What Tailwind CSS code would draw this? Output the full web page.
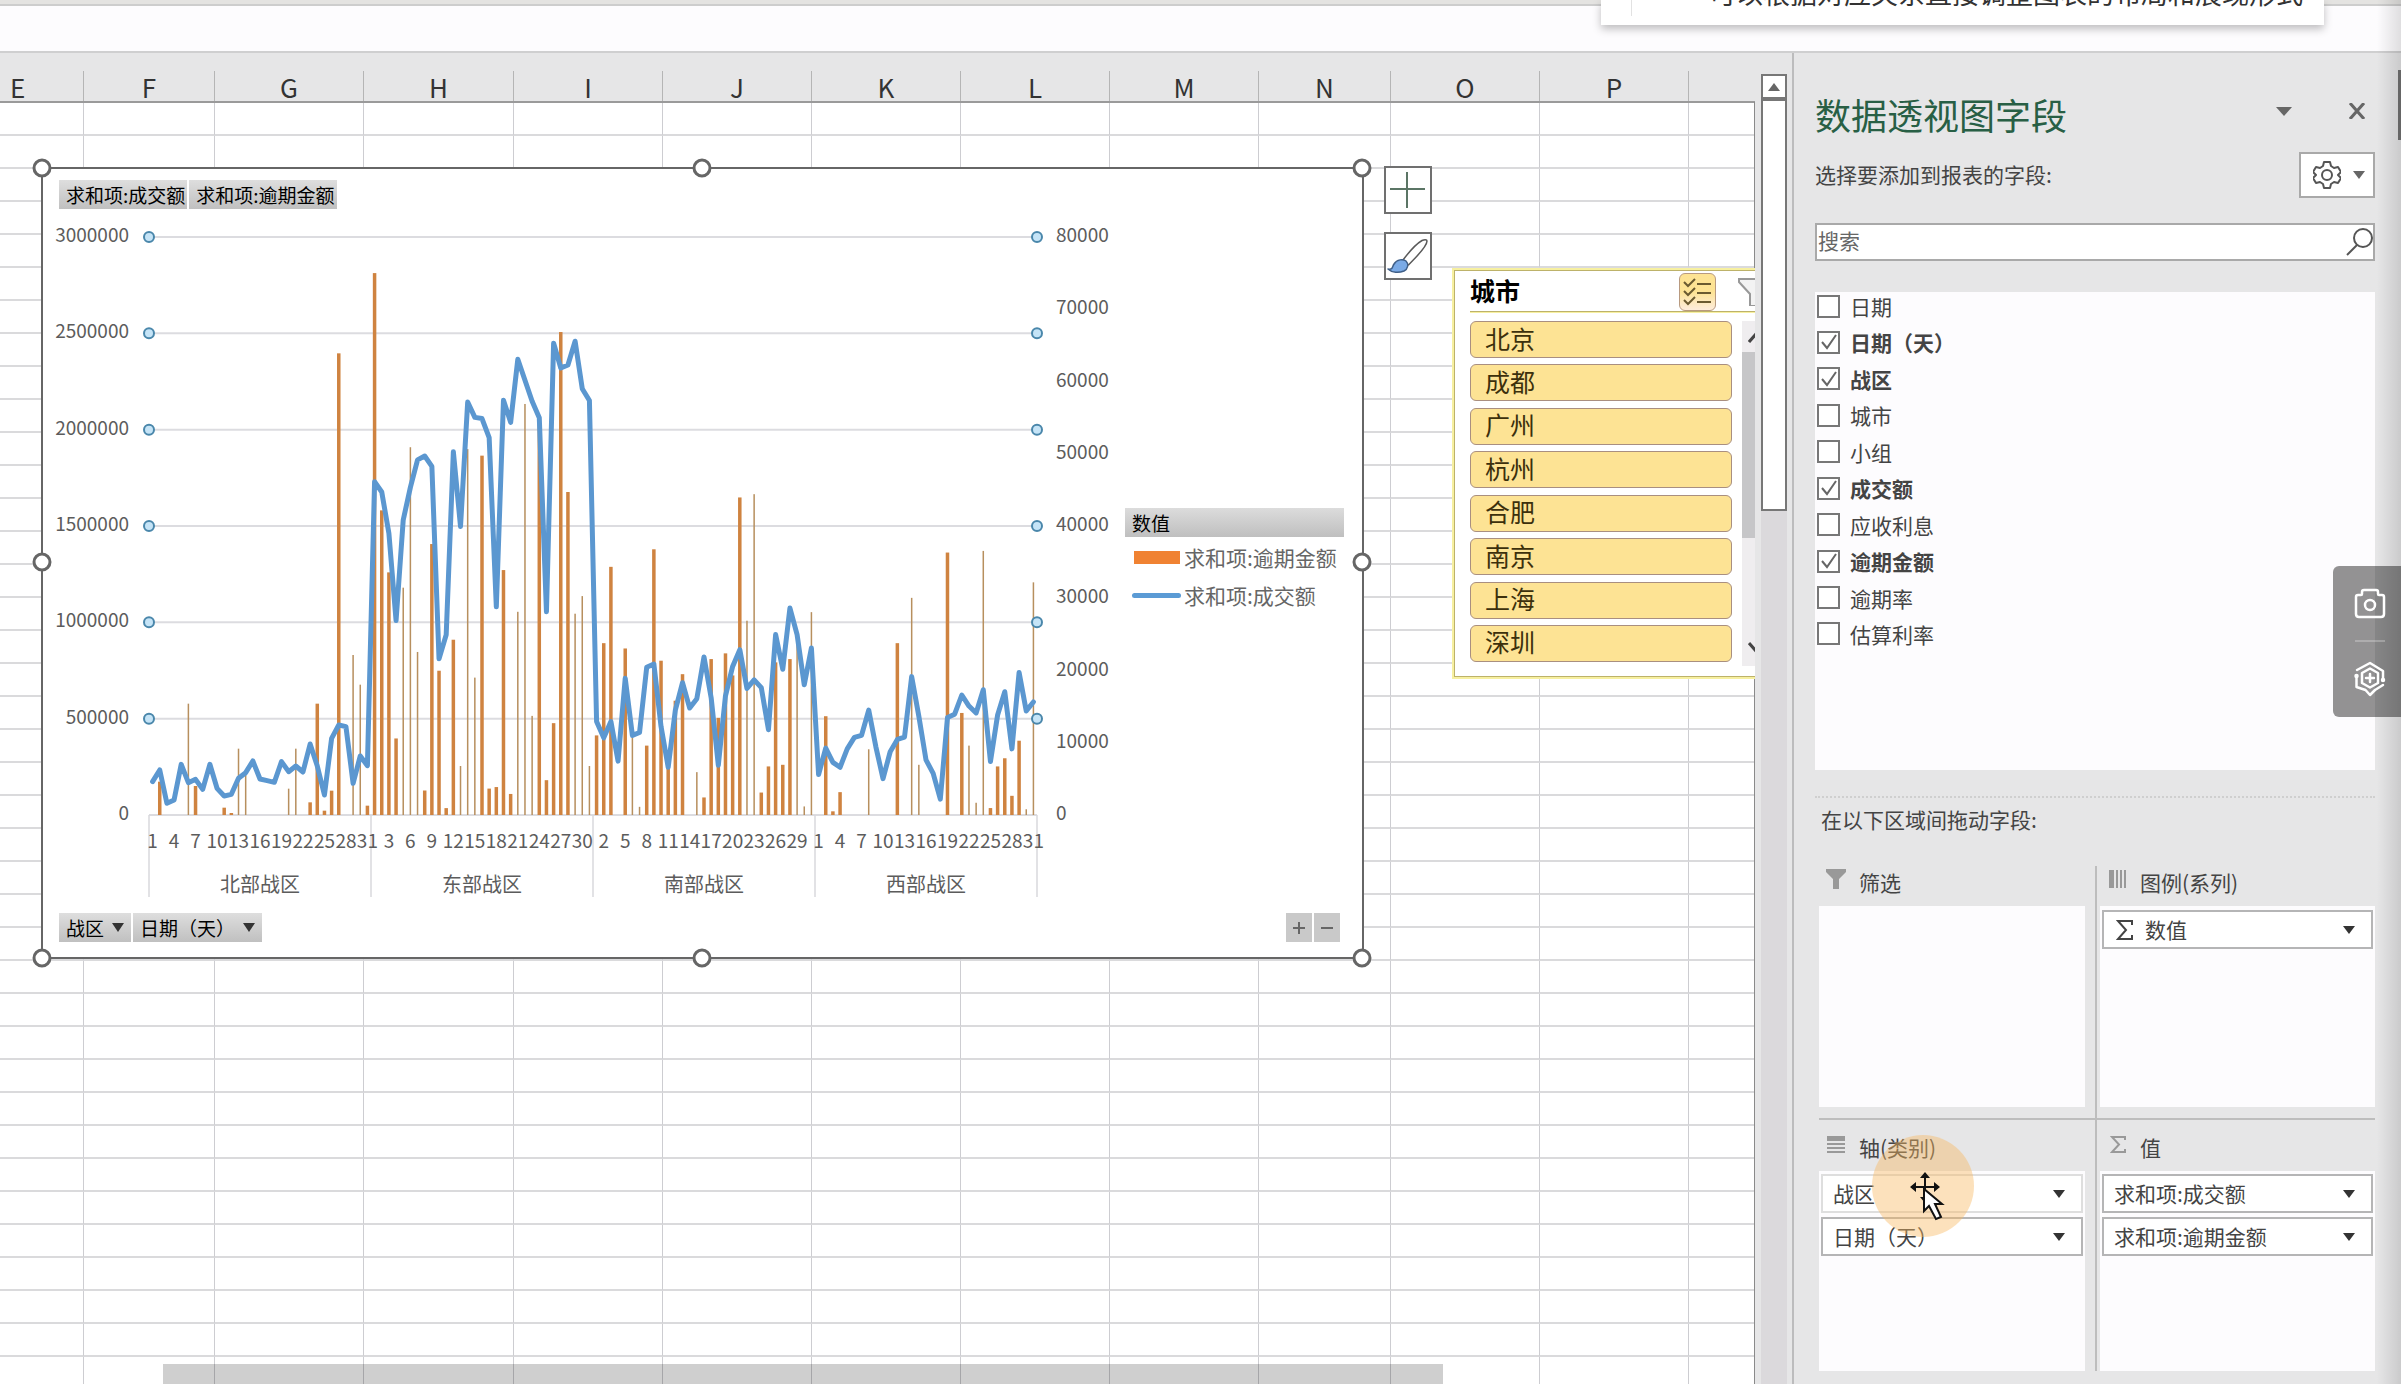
<!DOCTYPE html>
<html lang="zh-CN">
<head>
<meta charset="utf-8">
<title>数据透视图字段</title>
<script src="https://cdn.jsdelivr.net/npm/@tailwindcss/browser@4"></script>
</head>
<body class="relative flex h-screen flex-col overflow-hidden bg-[#e6e6e7] font-['Noto_Sans_CJK_SC',sans-serif] text-[21px] text-[#444]">

  <!-- ribbon edge and formula bar -->
  <div class="h-[6px] shrink-0 border-b-2 border-[#cdcdcd] bg-[#e4e3e1]"></div>
  <div class="h-[47px] shrink-0 border-b-2 border-[#cfcfd0] bg-[#fdfcfe]"></div>

  <main class="flex min-h-0 flex-1">
    <!-- worksheet -->
    <section class="relative min-w-0 flex-1 overflow-hidden">
      <table class="w-full table-fixed border-separate border-spacing-0 bg-white">
        <colgroup>
          <col class="w-[84px]"><col class="w-[131px]"><col class="w-[149px]"><col class="w-[150px]"><col class="w-[149px]"><col class="w-[149px]"><col class="w-[149px]"><col class="w-[149px]"><col class="w-[149px]"><col class="w-[132px]"><col class="w-[149px]"><col class="w-[149px]"><col>
        </colgroup>
        <thead><tr id="cols"></tr></thead>
        <tbody id="rows"></tbody>
      </table>
      <div class="absolute top-[49px] right-0 bottom-0 w-px bg-[#8a8a8a]"></div>

      <!-- pivot chart -->
      <div class="absolute top-[114px] left-[41px] flex h-[792px] w-[1323px] flex-col justify-between border-2 border-[#666] bg-white px-4 pt-[11px] pb-[15px] text-[19px] leading-[29px] text-black">
        <svg id="chart" class="absolute -top-[2px] -left-[2px] h-[792px] w-[1323px] overflow-visible" viewBox="41 167 1323 792"></svg>
        <div class="relative flex gap-[2px]">
          <button class="h-[29px] bg-linear-to-b from-[#dedede] to-[#c0c0c0] pr-[2px] pl-[7px]">求和项:成交额</button>
          <button class="h-[29px] bg-linear-to-b from-[#dedede] to-[#c0c0c0] pr-[2px] pl-[7px]">求和项:逾期金额</button>
        </div>
        <div class="absolute top-[339px] left-[1082px] w-[219px]">
          <div class="h-[29px] bg-linear-to-b from-[#dcdcdc] to-[#bfbfbf] pl-[7px]">数值</div>
          <div class="mt-px flex h-[38px] items-center gap-1 pl-[9px] text-[21px] whitespace-nowrap text-[#666]"><span class="h-[13px] w-[46px] shrink-0 bg-[#f08232]"></span>求和项:逾期金额</div>
          <div class="flex h-[38px] items-center gap-[3px] pl-[7px] text-[21px] whitespace-nowrap text-[#666]"><span class="h-[5px] w-[49px] shrink-0 rounded-full bg-[#5b9bd5]"></span>求和项:成交额</div>
        </div>
        <div class="relative flex gap-[2px]">
          <button class="flex h-[29px] items-center gap-2 bg-linear-to-b from-[#dedede] to-[#c0c0c0] px-[7px]">战区<svg class="h-[9px] w-3" viewBox="0 0 12 9"><path d="M0 0h12L6 9z" fill="#333"/></svg></button>
          <button class="flex h-[29px] items-center gap-2 bg-linear-to-b from-[#dedede] to-[#c0c0c0] px-[7px]">日期（天）<svg class="h-[9px] w-3" viewBox="0 0 12 9"><path d="M0 0h12L6 9z" fill="#333"/></svg></button>
          <button aria-label="展开" class="ml-auto grid h-[29px] w-[26px] place-items-center bg-[#c9c9c9]"><svg class="size-3" viewBox="0 0 12 12"><path d="M6 0v12M0 6h12" stroke="#666" stroke-width="2"/></svg></button>
          <button aria-label="折叠" class="mr-[6px] grid h-[29px] w-[26px] place-items-center bg-[#c9c9c9]"><svg class="size-3" viewBox="0 0 12 12"><path d="M0 6h12" stroke="#666" stroke-width="2"/></svg></button>
        </div>
      </div>

      <!-- chart side buttons -->
      <div class="absolute top-[113px] left-[1384px] flex flex-col gap-[18px]">
        <button aria-label="图表元素" class="grid size-12 place-items-center border-2 border-[#707070] bg-white"><svg class="size-9" viewBox="0 0 36 36"><path d="M17 0v36M-1 17h36" stroke="#5b7565" stroke-width="2"/></svg></button>
        <button aria-label="图表样式" class="grid size-12 place-items-center border-2 border-[#707070] bg-white"><svg class="size-11" viewBox="0 0 44 44" stroke="#5a5a5a" stroke-width="1.500" stroke-linejoin="round"><path d="M17 26C23 18 30 10 36 6.500C38 5.500 41 5 41 7C41 13 30 23 22.500 31z" fill="#fff"/><path d="M2 35c5 1 4-2 6-5c3-5 9-5 12-3c3 3 2 8-2 10c-5 2-12 2-16-2z" fill="#7aaae6" stroke="#3f5f88"/></svg></button>
      </div>

      <!-- city slicer -->
      <div class="absolute top-[217px] left-[1454px] h-[407px] w-[320px] border border-[#bdb26a] bg-white pt-px pl-[15px] shadow-[0_0_0_2px_#f7f0a0]">
        <div class="flex h-10 w-full items-center border-b border-[#bdb26a] text-[25px] leading-[36px] font-bold text-black shadow-[0_1px_0_#f7f0a0]">
          <span class="w-[209px] pb-[3px]">城市</span>
          <button aria-label="多选" class="grid h-[38px] w-[37px] place-items-center rounded-md border border-[#b89a80] bg-linear-to-b from-[#fde394] from-50% to-[#fdecdc]"><svg class="h-7 w-[29px]" viewBox="0 0 29 28" fill="none" stroke="#6a5a30" stroke-width="2"><path d="M1 4l4 4 7-7M1 13l4 4 7-7M1 22l4 4 7-7M14 6h14M14 15h14M14 24h14"/></svg></button>
          <svg class="ml-[22px] h-7 w-8" viewBox="0 0 32 28"><path d="M1 1h29v3L20 16v12h-8V16L1 4z" fill="#f3f3f3" stroke="#999" stroke-width="2"/></svg>
        </div>
        <div class="mt-[9px] flex gap-[10px]">
          <div id="cities" class="flex h-[341px] w-[262px] flex-col justify-between"></div>
          <div class="relative h-[345px] w-[28px] bg-[#efedef]">
            <div class="absolute top-[31px] h-[186px] w-full bg-[#c6c6c8]"></div>
            <svg class="absolute top-[10px] left-[6px] h-3 w-4" viewBox="0 0 16 12"><path d="M1 11l7-8 7 8" fill="none" stroke="#444" stroke-width="3"/></svg>
            <svg class="absolute bottom-3 left-[6px] h-3 w-4" viewBox="0 0 16 12"><path d="M1 1l7 8 7-8" fill="none" stroke="#444" stroke-width="3"/></svg>
          </div>
        </div>
      </div>

      <!-- caption backdrop -->
      <div class="absolute bottom-0 left-[163px] h-5 w-[1280px] bg-black/19"></div>
    </section>

    <!-- vertical scroll bar -->
    <div class="flex w-[37px] shrink-0 flex-col pt-[21px] pl-[6px]">
      <button aria-label="向上滚动" class="grid h-[25px] w-[26px] shrink-0 place-items-center border-2 border-[#777] bg-white"><svg class="h-2 w-3" viewBox="0 0 12 8"><path d="M6 0l6 8H0z" fill="#666"/></svg></button>
      <div class="h-[412px] w-[26px] shrink-0 border-2 border-[#777] bg-white"></div>
      <div class="w-[26px] flex-1 bg-[#dbd9dc]"></div>
    </div>

    <!-- field pane -->
    <aside class="relative flex w-[609px] shrink-0 flex-col border-l-2 border-[#bcbcbd] pt-9 pr-[26px] pl-[21px]">
      <header class="flex h-14 items-center">
        <h1 class="pb-[5px] text-[36px] leading-[51px] text-[#285f45]">数据透视图字段</h1>
        <button aria-label="窗格选项" class="mr-[57px] mb-3 ml-auto"><svg class="h-[9px] w-4" viewBox="0 0 16 9"><path d="M0 0h16L8 9z" fill="#666"/></svg></button>
        <button aria-label="关闭" class="mr-[10px] mb-[13px]"><svg class="size-4" viewBox="0 0 16 16"><path d="M1 0l14 16M15 0L1 16" stroke="#666" stroke-width="3"/></svg></button>
      </header>
      <div class="mt-[7px] flex h-[46px] items-center justify-between">
        <p>选择要添加到报表的字段:</p>
        <button aria-label="工具" class="flex h-[46px] w-[76px] items-center justify-center gap-3 border-2 border-[#a9a9a9] bg-white pl-1">
          <svg class="size-7" viewBox="0 0 28 28" fill="none" stroke="#555" stroke-width="2" stroke-linejoin="round"><path d="M11 1h6l1 4 3 2 4-1 3 5-3 3 3 3-3 5-4-1-3 2-1 4h-6l-1-4-3-2-4 1-3-5 3-3-3-3 3-5 4 1 3-2z"/><circle cx="14" cy="14" r="5"/></svg>
          <svg class="h-2 w-3" viewBox="0 0 12 8"><path d="M0 0h12L6 8z" fill="#666"/></svg>
        </button>
      </div>
      <label class="mt-[25px] flex h-[38px] items-center border-2 border-[#a9a9a9] bg-white">
        <input type="search" aria-label="搜索字段" placeholder="搜索" class="h-full min-w-0 flex-1 pb-1 pl-px outline-none placeholder:text-[#666]">
        <svg class="h-7 w-7" viewBox="0 0 28 28" fill="none" stroke="#555" stroke-width="2"><circle cx="18" cy="10" r="9"/><path d="M12 17L2 27"/></svg>
      </label>
      <div class="mt-[31px] h-[478px] shrink-0 bg-[#fdfcfe] px-[2px] pt-[2px]">
        <ul id="fields" class="flex h-[352px] flex-col justify-between"></ul>
      </div>
      <div class="mt-[26px] border-t-2 border-dotted border-[#cfcfcf]"></div>
      <p class="mt-[5px] ml-[6px] leading-8">在以下区域间拖动字段:</p>
      <div class="mt-[31px] ml-1 grid grid-cols-2">
        <section class="border-r-2 border-b-2 border-[#bdbdbd] pr-[10px] pb-[11px]">
          <h2 class="mb-[6px] flex h-[34px] items-center gap-[13px] pl-[7px]"><svg class="mb-2 size-5" viewBox="0 0 20 20"><path d="M0 0h20v3l-7 7v10H7V10L0 3z" fill="#999"/></svg>筛选</h2>
          <div class="h-[201px] bg-[#fdfcfe]"></div>
        </section>
        <section class="border-b-2 border-[#bdbdbd] pb-[11px] pl-[3px]">
          <h2 class="mb-[6px] flex h-[34px] items-center gap-[14px] pl-[9px]"><svg class="mb-2 h-[18px] w-[17px]" viewBox="0 0 17 18"><path d="M0 0h5v18H0zM7 0h2v18H7zM11 0h2v18h-2zM15 0h2v18h-2z" fill="#999"/></svg>图例(系列)</h2>
          <div class="h-[201px] bg-[#fdfcfe] px-[2px] pt-1">
            <button class="flex h-[39px] w-full items-center gap-3 border-2 border-[#b5b5b6] bg-white pr-4 pl-3"><svg class="h-5 w-[17px]" viewBox="0 0 17 20" fill="none" stroke="#444" stroke-width="2"><path d="M16 5V1H2l8 9-8 9h14v-4"/></svg>数值<svg class="ml-auto h-2 w-3" viewBox="0 0 12 8"><path d="M0 0h12L6 8z" fill="#333"/></svg></button>
          </div>
        </section>
        <section class="border-r-2 border-[#bdbdbd] pt-[11px] pr-[10px]">
          <h2 class="mb-[6px] flex h-[34px] items-center gap-[14px] pl-2"><svg class="mb-2 h-[17px] w-[18px]" viewBox="0 0 18 17"><path d="M0 0h18v5H0zM0 7h18v2H0zM0 11h18v2H0zM0 15h18v2H0z" fill="#999"/></svg>轴(类别)</h2>
          <div class="flex h-[200px] flex-col gap-1 bg-[#fdfcfe] px-[2px] pt-[3px]">
            <button class="flex h-[39px] items-center justify-between border-2 border-[#dedede] bg-white pr-4 pl-[10px]">战区<svg class="h-2 w-3" viewBox="0 0 12 8"><path d="M0 0h12L6 8z" fill="#333"/></svg></button>
            <button class="flex h-[39px] items-center justify-between border-2 border-[#b5b5b6] bg-white pr-4 pl-[10px]">日期（天）<svg class="h-2 w-3" viewBox="0 0 12 8"><path d="M0 0h12L6 8z" fill="#333"/></svg></button>
          </div>
        </section>
        <section class="pt-[11px] pl-[3px]">
          <h2 class="mb-[6px] flex h-[34px] items-center gap-[14px] pl-[10px]"><svg class="mb-2 h-[17px] w-4" viewBox="0 0 16 17" fill="none" stroke="#999" stroke-width="2"><path d="M15 4V1H2l7 7.500-7 7.500h13v-3"/></svg>值</h2>
          <div class="flex h-[200px] flex-col gap-1 bg-[#fdfcfe] px-[2px] pt-[3px]">
            <button class="flex h-[39px] items-center justify-between border-2 border-[#b5b5b6] bg-white pr-4 pl-[10px]">求和项:成交额<svg class="h-2 w-3" viewBox="0 0 12 8"><path d="M0 0h12L6 8z" fill="#333"/></svg></button>
            <button class="flex h-[39px] items-center justify-between border-2 border-[#b5b5b6] bg-white pr-4 pl-[10px]">求和项:逾期金额<svg class="h-2 w-3" viewBox="0 0 12 8"><path d="M0 0h12L6 8z" fill="#333"/></svg></button>
          </div>
        </section>
      </div>

      <!-- pointer with click halo -->
      <svg class="pointer-events-none absolute top-[1080px] left-[76px] h-[106px] w-[106px]" viewBox="0 0 106 106">
        <circle cx="53" cy="53" r="51" fill="#f9b860" fill-opacity=".42"/>
        <path d="M55 43v22M42 54h26" stroke="#111" stroke-width="2"/>
        <path d="M55 39l5 6H50zM40 54l6-5v10zM70 54l-6-5v10zM55 70l5-6H50z" fill="#111"/>
        <path d="M54 56v22l5-5 7 13 5-2-6-13h7z" fill="#fff" stroke="#111" stroke-width="2"/>
      </svg>
    </aside>
  </main>

  <!-- window edge shade -->
  <div class="absolute top-0 right-0 bottom-0 w-6 bg-linear-to-r from-transparent to-black/12"></div>
  <div class="absolute top-[70px] right-0 h-[70px] w-[3px] bg-[#666]"></div>

  <!-- tooltip cut by the top edge -->
  <div class="absolute top-0 right-[77px] h-[25px] w-[723px] overflow-hidden bg-white shadow-[0_4px_8px_rgba(0,0,0,0.25)]">
    <div class="absolute top-0 left-[30px] h-4 w-px bg-[#e2e2e2]"></div>
    <p class="absolute -top-[23px] left-[108px] text-[27px] leading-8 whitespace-nowrap text-[#333]">可以根据对应关系直接调整图表的布局和展现形式</p>
  </div>

  <!-- capture toolbar -->
  <div class="absolute top-[566px] right-0 flex h-[151px] w-[68px] flex-col items-center justify-between rounded-l-md bg-black/42 py-[20px] pl-[6px]">
    <button aria-label="截图"><svg class="h-[34px] w-8" viewBox="0 0 32 34" fill="none" stroke="#fff" stroke-width="2.500" stroke-linejoin="round"><path d="M4 9h3q1 0 1-1V6q0-2 2-2h12q2 0 2 2v2q0 1 1 1h3q2 0 2 2v17q0 3-3 3H5q-3 0-3-3V11q0-2 2-2z"/><circle cx="16" cy="19" r="5"/></svg></button>
    <span class="h-[2px] w-[30px] bg-white/25"></span>
    <button aria-label="增强"><svg class="h-9 w-8" viewBox="0 0 32 36" fill="none" stroke="#fff" stroke-width="2.500" stroke-linejoin="round" stroke-linecap="round"><path d="M3 9L16 2l13 8v9M2.500 15v11l9 3 4.500 5 5-5 8-5"/><path d="M16 7.500l8 4.500v10l-8 4.500L8 22V12z"/><path d="M16 13v8M12 17h8"/><circle cx="2.500" cy="15" r="1"/><circle cx="29" cy="19" r="1"/></svg></button>
  </div>

<script>
  // worksheet grid
  document.getElementById('cols').innerHTML = [...'EFGHIJKLMNOP', ''].map((c, i) =>
    `<th scope="col" class="h-[50px] border-b-2 border-[#9a9a9a] bg-[#e6e6e7] p-0 pt-[18px] text-[26px] font-normal text-[#333]"><div class="h-[30px] leading-[32px] ${i === 0 ? 'pl-[10px] text-left' : ''} ${i < 12 ? 'border-r border-[#b5b5b5]' : ''}">${c}</div></th>`).join('');
  document.getElementById('rows').innerHTML = Array(39).fill(
    '<tr>' + '<td class="h-[33px] border-r border-b-2 border-r-[#cdcdd1] border-b-[#dadadc] p-0"></td>'.repeat(13) + '</tr>').join('');

  // slicer items
  document.getElementById('cities').innerHTML = ['北京', '成都', '广州', '杭州', '合肥', '南京', '上海', '深圳'].map(c =>
    `<button class="h-[37px] rounded-md border border-[#a98f80] bg-[#fde394] pb-[3px] pl-[14px] text-left text-[25px] leading-[31px] text-[#3c300c]">${c}</button>`).join('');

  // pivot field list
  document.getElementById('fields').innerHTML = [['日期', 0], ['日期（天）', 1], ['战区', 1], ['城市', 0], ['小组', 0], ['成交额', 1], ['应收利息', 0], ['逾期金额', 1], ['逾期率', 0], ['估算利率', 0]].map(([n, on]) =>
    `<li><label class="flex h-6 items-center gap-[10px] leading-6 ${on ? 'font-bold' : ''}"><span class="grid size-[23px] place-items-center"><input type="checkbox" ${on ? 'checked' : ''} class="peer col-start-1 row-start-1 size-[23px] appearance-none border-2 border-[#777] bg-white"><svg class="invisible col-start-1 row-start-1 size-4 peer-checked:visible" viewBox="0 0 16 16"><path d="M1 8l5 6L15 1" fill="none" stroke="#666" stroke-width="2"/></svg></span>${n}</label></li>`).join('');

  // chart: plot area x 149..1037, baseline 815, 124 daily categories in four regions
  const X0 = 149, X1 = 1037, STEP = (X1 - X0) / 124, BASE = 815, TOP = 237;
  const cx = i => X0 + STEP * (i + 0.5);
  // each block: first category, units per pixel, baseline in units, readings in units
  const line = [
    [0, 3, 1005, [905,870,970,960,853,908,898,928,853,925,948,943,895,878,843,897,902,907,845,875,858,876,792,858,945,775,735,740,910,828,857]],
    [31, 2.613, 1476, [605,632,740,968,705,620,548,538,565,1068,1005,527,722,397,437,440,490,932,392,450,285,340,395,438,945,243,308,300,238,362,393]],
    [62, 2.45, 1457, [1228,1268,1228,1325,1122,1262,1255,1095,1087,1240,1340,1200,1133,1195,1172,1070,1170,1335,1165,1093,1052,1147,1126,1145,1248,1015,1100,950,1015,1138,1048,1358,1293,1328,1340,1295,1267,1262,1200,1290,1368,1302,1272,1266,1118,1215,1322,1355,1418,1218,1210,1163,1190,1207,1150,1326,1212,1155,1295,1108,1202,1180]]
  ];
  // each bar: category, reading, 1 for a full-width bar
  const bars = [
    [3, 1005, [[1,905,1],[5,671],[6,918,1],[10,983,1],[11,999,1],[12,806],[13,880],[19,926],[20,806],[22,967,1],[23,671,1],[24,992,1],[25,932,1],[26,-380,1],[28,525],[29,614],[30,977,1]]],
    [2.613, 1476, [[31,60,1],[32,680,1],[33,842,1],[34,1276,1],[35,882],[36,515],[37,1050],[38,1412,1],[39,768,1],[40,1099,1],[41,1458,1],[42,1018,1],[43,1348],[44,520],[45,1117],[46,537,1],[47,1407,1],[48,1403,1],[49,836,1],[50,1421,1],[51,945],[52,402],[53,1217],[54,440,1],[55,1385,1],[56,1236,1],[57,214,1],[58,632,1],[59,950],[60,904],[61,1348]]],
    [2.45, 1457, [[62,1262,1],[63,1036,1],[64,849,1],[66,1049,1],[67,1262],[68,1437],[69,1287,1],[70,806,1],[71,1079,1],[72,1340,1],[73,1177,1],[74,1112,1],[76,1352],[77,1414,1],[78,1075,1],[79,1219,1],[80,1061,1],[81,1115,1],[82,679,1],[83,981],[84,671],[85,1402,1],[86,1338,1],[87,1083,1],[88,1334,1],[89,1075,1],[90,1020],[91,1436],[92,960],[94,1215,1],[95,1448,1],[96,1401,1],[100,1296],[104,1036,1],[106,925],[107,1334],[111,814,1],[113,1207,1],[114,1287],[115,1427],[116,810],[117,1440,1],[118,1338,1],[119,1318,1],[120,1410,1],[121,1275,1],[122,1443],[123,887]]]
  ];
  let s = '';
  const text = (x, y, t, anchor, size) => `<text x="${x}" y="${y}" text-anchor="${anchor}" font-size="${size}" fill="#5c5c5c">${t}</text>`;
  for (let k = 0; k <= 6; k++) {
    const y = TOP + (BASE - TOP) * k / 6;
    s += `<path d="M${X0} ${y}H${X1}" stroke="#dcdce0" stroke-width="2"/>` + text(129, y + 5, 3000000 - k * 500000, 'end', 19);
  }
  for (let k = 0; k <= 8; k++) s += text(1056, TOP + (BASE - TOP) * k / 8 + 5, 80000 - k * 10000, 'start', 19);
  for (let k = 0; k <= 4; k++) s += `<path d="M${X0 + k * 222} 815V897" stroke="#d9d9dc" stroke-width="1.500"/>`;
  ['北部战区', '东部战区', '南部战区', '西部战区'].forEach((n, k) => s += text(X0 + 111 + k * 222, 892, n, 'middle', 20));
  for (let i = 0; i < 124; i += 3) s += text(cx(i), 848, i % 31 + 1, 'middle', 19);
  for (const [u, b, list] of bars) for (const [i, r, w] of list) {
    const h = (b - r) / u;
    s += `<rect x="${cx(i) - (w ? 1.75 : 0.75)}" y="${BASE - h}" width="${w ? 3.500 : 1.500}" height="${h}" fill="${w ? '#cf8340' : '#b78f5e'}"/>`;
  }
  const pts = line.flatMap(([f, u, b, v]) => v.map((r, j) => `${cx(f + j)},${BASE - (b - r) / u}`));
  s += `<polyline points="${pts.join(' ')}" fill="none" stroke="#5b97d0" stroke-width="5" stroke-linejoin="round" stroke-linecap="round"/>`;
  for (let k = 0; k < 6; k++) for (const x of [X0, X1])
    s += `<circle cx="${x}" cy="${TOP + (BASE - TOP) * k / 6}" r="5" fill="#c5e4f7" stroke="#4a87ab" stroke-width="2"/>`;
  for (const x of [42, 702, 1362]) for (const y of [168, 562, 958])
    if (x !== 702 || y !== 562) s += `<circle cx="${x}" cy="${y}" r="8" fill="#fff" stroke="#666" stroke-width="3"/>`;
  document.getElementById('chart').innerHTML = s;
</script>
</body>
</html>
